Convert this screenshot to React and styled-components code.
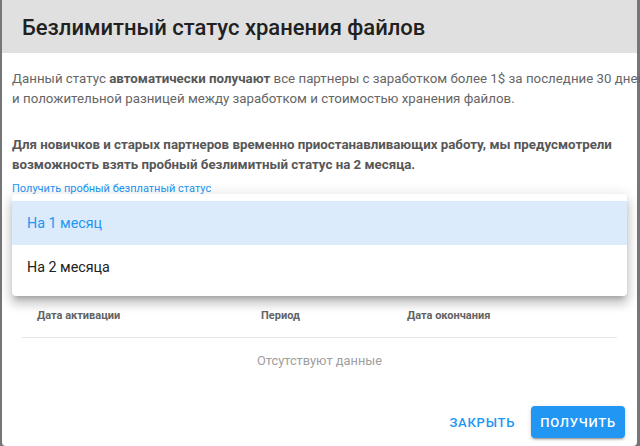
import React from "react";
import styled, { createGlobalStyle } from "styled-components";

const GlobalStyle = createGlobalStyle`
  html, body {
    margin: 0;
    padding: 0;
    background: #767676;
    font-family: Roboto, "Noto Sans", "Liberation Sans", sans-serif;
    -webkit-font-smoothing: antialiased;
  }
  #root {
    height: 446px;
    overflow: hidden;
  }
`;

const blue = "#2196f3";

const Dialog = styled.div`
  margin-left: 2px;
  width: 635px;
  height: 446px;
  background: #fff;
  border-radius: 0 0 4px 4px;
  display: flex;
  flex-direction: column;
  box-sizing: border-box;
`;

const Header = styled.div`
  height: 53px;
  flex-shrink: 0;
  background: #e0e0e0;
  padding: 2px 20px 0;
  display: flex;
  align-items: center;
  box-sizing: border-box;
`;

const Title = styled.h2`
  margin: 0;
  font-size: 22px;
  font-weight: 500;
  color: #212121;
  letter-spacing: 0;
`;

const Body = styled.div`
  padding: 16px 10px 0;
  font-size: 13.3px;
  line-height: 20px;
  color: #666;
`;

const Paragraph = styled.p`
  margin: 0 0 ${(p) => p.$gap || 0}px;
  white-space: nowrap;

  b {
    font-weight: 700;
    color: #575757;
  }
`;

const TrialLink = styled.a`
  display: block;
  margin-top: 6px;
  font-size: 11px;
  line-height: 16px;
  color: ${blue};
  text-decoration: none;
`;

const Field = styled.div`
  position: relative;
  height: 96px;
`;

const Menu = styled.ul`
  position: absolute;
  top: -3px;
  left: 0;
  right: 0;
  margin: 0;
  padding: 7px 0;
  list-style: none;
  background: #fff;
  border-radius: 4px;
  box-shadow: 0 5px 5px -3px rgba(0, 0, 0, 0.2),
    0 8px 10px 1px rgba(0, 0, 0, 0.14), 0 3px 14px 2px rgba(0, 0, 0, 0.12);
  z-index: 2;
`;

const MenuItem = styled.li`
  height: 44px;
  display: flex;
  align-items: center;
  padding: 0 15px;
  font-size: 14.3px;
  color: ${(p) => (p.$active ? blue : "#212121")};
  background: ${(p) => (p.$active ? "#dbebfb" : "transparent")};
`;

const Table = styled.div`
  margin: 0 20px;
`;

const HeadRow = styled.div`
  display: grid;
  grid-template-columns: 224px 146px 1fr;
  height: 44px;
  align-items: center;
  border-bottom: 1px solid #e6e6e6;
`;

const HeadCell = styled.div`
  padding-left: 15px;
  font-size: 11px;
  font-weight: 700;
  color: #636363;
`;

const EmptyRow = styled.div`
  height: 44px;
  display: flex;
  align-items: center;
  justify-content: center;
  font-size: 12.8px;
  color: #9e9e9e;
`;

const Actions = styled.div`
  margin-top: auto;
  display: flex;
  justify-content: flex-end;
  gap: 7px;
  padding: 0 12px 8px;
`;

const Button = styled.button`
  height: 32px;
  padding: 0 9px;
  border: none;
  border-radius: 4px;
  font-family: inherit;
  font-size: 13px;
  font-weight: 500;
  letter-spacing: 0.06em;
  text-transform: uppercase;
  cursor: pointer;
  color: ${(p) => (p.$primary ? "#fff" : blue)};
  background: ${(p) => (p.$primary ? blue : "transparent")};
  box-shadow: ${(p) =>
    p.$primary
      ? "0 3px 1px -2px rgba(0,0,0,.2), 0 2px 2px 0 rgba(0,0,0,.14), 0 1px 5px 0 rgba(0,0,0,.12)"
      : "none"};
`;

const periods = ["На 1 месяц", "На 2 месяца"];
const columns = ["Дата активации", "Период", "Дата окончания"];

export default function App() {
  return (
    <>
      <GlobalStyle />
      <Dialog>
        <Header>
          <Title>Безлимитный статус хранения файлов</Title>
        </Header>
        <Body>
          <Paragraph $gap={26}>
            Данный статус <b>автоматически получают</b> все партнеры с
            заработком более 1$ за последние 30 дней
            <br />и положительной разницей между заработком и стоимостью
            хранения файлов.
          </Paragraph>
          <Paragraph>
            <b>
              Для новичков и старых партнеров временно приостанавливающих
              работу, мы предусмотрели
              <br />
              возможность взять пробный безлимитный статус на 2 месяца.
            </b>
          </Paragraph>
          <TrialLink href="#">Получить пробный безплатный статус</TrialLink>
          <Field>
            <Menu>
              {periods.map((label, i) => (
                <MenuItem key={label} $active={i === 0}>
                  {label}
                </MenuItem>
              ))}
            </Menu>
          </Field>
        </Body>
        <Table>
          <HeadRow>
            {columns.map((c) => (
              <HeadCell key={c}>{c}</HeadCell>
            ))}
          </HeadRow>
          <EmptyRow>Отсутствуют данные</EmptyRow>
        </Table>
        <Actions>
          <Button>Закрыть</Button>
          <Button $primary>Получить</Button>
        </Actions>
      </Dialog>
    </>
  );
}
